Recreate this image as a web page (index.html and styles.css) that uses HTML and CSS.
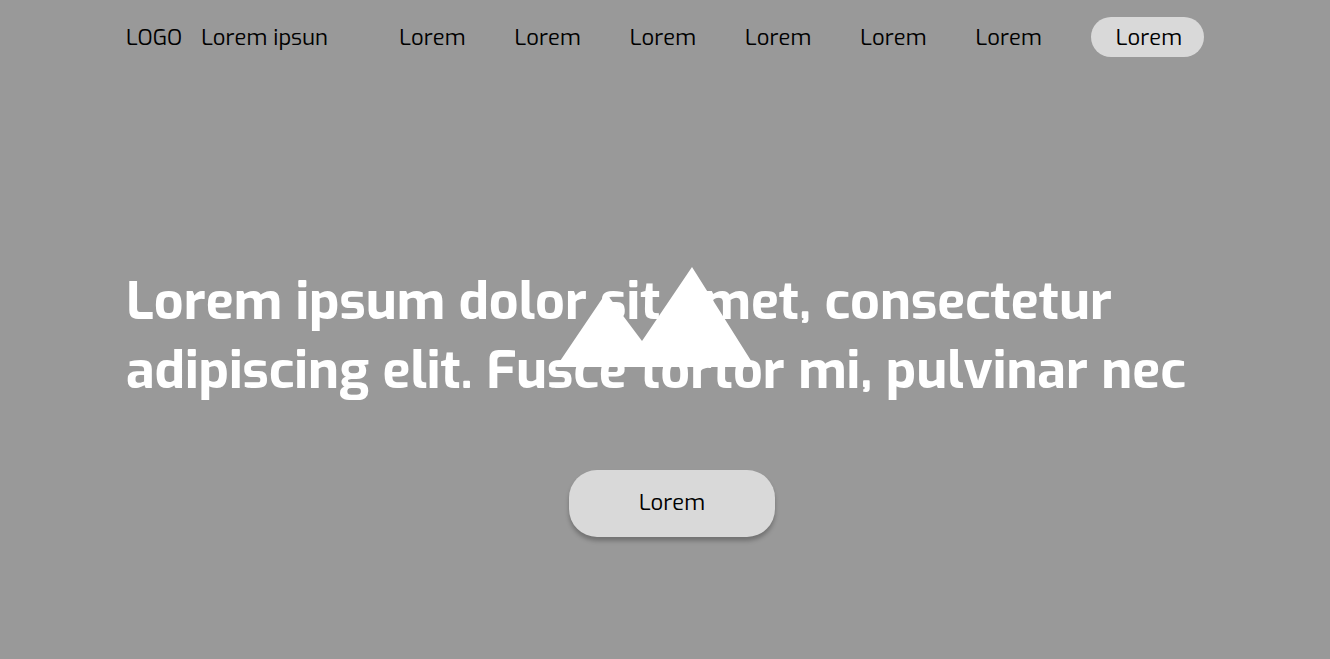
FILE: index.html
```html
<!DOCTYPE html>
<html lang="en">
<head>
<meta charset="utf-8">
<meta name="viewport" content="width=device-width, initial-scale=1">
<title>Lorem ipsun</title>
<link rel="stylesheet" href="styles.css">
</head>
<body>
<header class="header">
  <a class="brand" href="#"><span>LOGO</span><span>Lorem ipsun</span></a>
  <nav class="nav">
    <a href="#">Lorem</a>
    <a href="#">Lorem</a>
    <a href="#">Lorem</a>
    <a href="#">Lorem</a>
    <a href="#">Lorem</a>
    <a href="#">Lorem</a>
    <a class="nav-pill" href="#">Lorem</a>
  </nav>
</header>
<main class="hero">
  <div class="hero-copy">
    <h1 class="title">Lorem ipsum dolor sit amet, consectetur adipiscing elit. Fusce tortor mi, pulvinar nec</h1>
    <svg class="mountains" viewBox="0 0 200 100" aria-hidden="true"><path d="M0 100 50 26 86 74 136 0 199 100Z" fill="#fff"/></svg>
  </div>
  <button class="cta" type="button">Lorem</button>
</main>
</body>
</html>
```
FILE: styles.css
```css
* {
  box-sizing: border-box;
}

body {
  margin: 0;
  min-height: 100vh;
  background: #999;
  color: #000;
  font-family: Exo, "Exo 2", "Open Sans", sans-serif;
  font-size: 22px;
  line-height: 32px;
}

a {
  color: inherit;
  text-decoration: none;
}

.header {
  display: flex;
  align-items: baseline;
  justify-content: space-between;
  padding: 17px 126px;
}

.brand {
  display: flex;
  gap: 19px;
}

.nav {
  display: flex;
  align-items: baseline;
  gap: 49px;
}

.nav-pill {
  padding: 5px 22px 3px 25px;
  border-radius: 20px;
  background: #d9d9d9;
}

.hero {
  display: flex;
  flex-direction: column;
  align-items: center;
  gap: 65px;
  padding: 193px 112px 64px 126px;
}

.hero-copy {
  position: relative;
  width: 100%;
}

.title {
  margin: 0;
  color: #fff;
  font-size: 52px;
  line-height: 69px;
  font-weight: 700;
}

.mountains {
  position: absolute;
  top: 0;
  left: calc(50% - 116px);
  width: 200px;
  height: 100px;
}

.cta {
  padding: 17px 70px 18px;
  border: 0;
  border-radius: 28px;
  background: #d9d9d9;
  box-shadow: 0 4px 4px rgba(0, 0, 0, 0.25);
  color: inherit;
  font: inherit;
}
```
